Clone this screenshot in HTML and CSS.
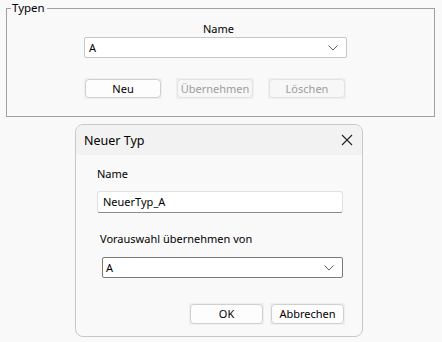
FILE: index.html
```html
<!DOCTYPE html>
<html lang="de">
<head>
<meta charset="utf-8">
<title>Typen</title>
<link rel="stylesheet" href="styles.css">
</head>
<body>
	<fieldset class="group">
		<legend>Typen</legend>
		<div class="group-body">
			<div class="caption">Name</div>
			<div class="combo">
				<span>A</span>
				<svg class="chev" width="10" height="6" viewBox="0 0 10 6"><path d="M0.5 0.5 L5 5 L9.5 0.5" fill="none" stroke="#606060" stroke-width="1"/></svg>
			</div>
			<div class="buttons">
				<span class="btn-wrap"><button class="btn">Neu</button></span>
				<span class="btn-wrap"><button class="btn" disabled>Übernehmen</button></span>
				<span class="btn-wrap"><button class="btn" disabled>Löschen</button></span>
			</div>
		</div>
	</fieldset>

	<div class="dialog">
		<div class="titlebar">
			<span class="title">Neuer Typ</span>
			<svg class="close" width="12" height="12" viewBox="0 0 12 12"><path d="M1 1 L11 11 M11 1 L1 11" stroke="#222" stroke-width="1.1"/></svg>
		</div>
		<div class="dialog-body">
			<div class="lbl lbl-name">Name</div>
			<div class="textbox">NeuerTyp_A</div>
			<div class="lbl lbl-pre">Vorauswahl übernehmen von</div>
			<div class="combo combo-dlg">
				<span>A</span>
				<svg class="chev" width="10" height="6" viewBox="0 0 10 6"><path d="M0.5 0.5 L5 5 L9.5 0.5" fill="none" stroke="#606060" stroke-width="1"/></svg>
			</div>
			<div class="dlg-buttons">
				<span class="btn-wrap"><button class="btn">OK</button></span>
				<span class="btn-wrap"><button class="btn">Abbrechen</button></span>
			</div>
		</div>
	</div>
</body>
</html>
```

FILE: styles.css
```css
body {
	margin: 0;
	background: #f9f9f9;
	font-family: "Noto Sans", "Liberation Sans", sans-serif;
	font-size: 11px;
	color: #000;
}
.group {
	margin: 2px 0 0 6px;
	width: 429px;
	height: 115px;
	box-sizing: border-box;
	border: 1px solid #a0a0a0;
	padding: 0;
}
.group legend {
	margin-left: 4px;
	padding: 0 2px 0 1px;
	line-height: 12px;
	font-size: 11.5px;
}
.group-body {
	padding-left: 77px;
	width: 263px;
}
.caption {
	text-align: center;
	margin-top: 7px;
	height: 16px;
	line-height: 16px;
	padding-left: 6px;
}
.combo {
	height: 21px;
	box-sizing: border-box;
	background: #fff;
	border: 1px solid #c6c6c6;
	border-radius: 2px;
	display: flex;
	align-items: center;
	justify-content: space-between;
	padding: 0 8px 0 4px;
}
.chev {
	display: block;
}
.buttons {
	display: flex;
	gap: 14px;
	margin-top: 20px;
}
.btn-wrap {
	display: block;
	background: #efefef;
	padding: 1px;
}
.btn {
	display: block;
	width: 76px;
	height: 19px;
	box-sizing: border-box;
	background: #fdfdfd;
	border: 1px solid #d0d0d0;
	border-radius: 4px;
	font: inherit;
	color: #000;
	padding: 0;
	line-height: 16px;
}
.btn:disabled {
	background: #f7f7f7;
	border-color: #e3e3e3;
	color: #9d9d9d;
}
.dialog {
	margin: 7px 0 0 75px;
	width: 288px;
	height: 213px;
	box-sizing: border-box;
	border: 1px solid #c8c8c8;
	border-radius: 8px;
	background: #f9f9f9;
	overflow: hidden;
}
.titlebar {
	height: 30px;
	background: #f2f2f2;
	display: flex;
	align-items: center;
	justify-content: space-between;
	padding: 0 9px 0 8px;
	font-size: 12.5px;
}
.close {
	display: block;
}
.dialog-body {
	padding: 0 17px 0 21px;
}
.lbl {
	height: 16px;
	line-height: 16px;
}
.lbl-name {
	margin-top: 11px;
}
.textbox {
	margin-top: 9px;
	height: 22px;
	box-sizing: border-box;
	background: #fff;
	border: 1px solid #e0e0e0;
	border-bottom: 1px solid #8a8a8a;
	border-radius: 3px;
	padding: 0 5px;
	line-height: 20px;
	margin-right: 2px;
}
.lbl-pre {
	margin-top: 18px;
	padding-left: 3px;
}
.combo-dlg {
	margin: 10px 0 0 5px;
	height: 21px;
	width: 241px;
	border-color: #7a7a7a;
	border-radius: 2px;
	padding-left: 3px;
}
.dlg-buttons {
	display: flex;
	justify-content: flex-end;
	gap: 6px;
	margin-top: 25px;
}
.dlg-buttons .btn {
	width: 73px;
	height: 20px;
}
```
